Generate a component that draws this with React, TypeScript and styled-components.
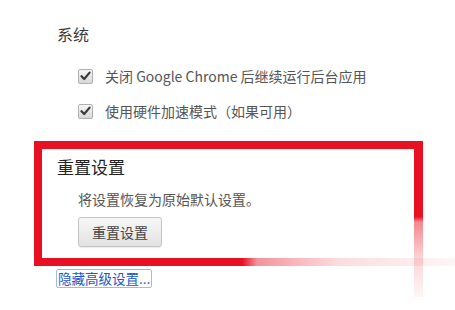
import styled, { createGlobalStyle } from 'styled-components';

const GlobalStyle = createGlobalStyle`
  html, body {
    margin: 0;
    padding: 0;
    background: #ffffff;
  }
  body {
    font-family: "Noto Sans CJK SC", "Liberation Sans", sans-serif;
    color: #333333;
  }
`;

const options = ['关闭 Google Chrome 后继续运行后台应用', '使用硬件加速模式（如果可用）'];

const App = () => {
  return (
    <Page>
      <GlobalStyle />
      <SectionTitle>系统</SectionTitle>
      <CheckList>
        {options.map((label) => (
          <CheckRow key={label}>
            <CheckBox>
              <svg width="11" height="10" viewBox="0 0 11 10">
                <path d="M1.5 5.2 L4.2 8 L9.6 1.6" fill="none" stroke="#3a3a3a" strokeWidth="2.2" strokeLinecap="round" strokeLinejoin="round" />
              </svg>
            </CheckBox>
            <span>{label}</span>
          </CheckRow>
        ))}
      </CheckList>
      <ResetBox>
        <ResetTitle>重置设置</ResetTitle>
        <Description>将设置恢复为原始默认设置。</Description>
        <ResetButton type="button">重置设置</ResetButton>
      </ResetBox>
      <HideLink href="#">隐藏高级设置...</HideLink>
    </Page>
  );
};

export default App;

// Styled Components
const Page = styled.div`
  width: 455px;
  height: 310px;
  box-sizing: border-box;
  padding-top: 24px;
  overflow: hidden;
`;

const SectionTitle = styled.h3`
  margin: 0 0 22px 57px;
  font-size: 16px;
  line-height: 20px;
  font-weight: normal;
  color: #3a3a3a;
`;

const CheckList = styled.div`
  display: flex;
  flex-direction: column;
  gap: 15px;
  margin-left: 78px;
`;

const CheckRow = styled.label`
  display: flex;
  align-items: center;
  gap: 12px;
  height: 20px;
  font-size: 14px;
  color: #555555;
`;

const CheckBox = styled.span`
  display: flex;
  align-items: center;
  justify-content: center;
  width: 13px;
  height: 13px;
  border: 1px solid #b0b0b0;
  border-radius: 2px;
  background: linear-gradient(#f6f6f6, #d8d8d8);
`;

const ResetBox = styled.section`
  position: relative;
  box-sizing: border-box;
  width: 380px;
  margin: 20px 0 0 34px;
  padding: 7px 0 11px 15px;
  border-top: 8px solid #e81123;
  border-left: 8px solid #e81123;

  &::after {
    content: '';
    position: absolute;
    left: -8px;
    top: 100%;
    width: 421px;
    height: 8px;
    background: linear-gradient(
      to right,
      #e81123 0%,
      #e81123 49.5%,
      rgba(232, 17, 35, 0.45) 53%,
      rgba(232, 17, 35, 0.15) 72%,
      rgba(232, 17, 35, 0.04) 100%
    );
  }

  &::before {
    content: '';
    position: absolute;
    left: 100%;
    top: -8px;
    width: 9px;
    height: 156px;
    background: linear-gradient(
      to bottom,
      #e81123 0%,
      #e81123 48.5%,
      rgba(232, 17, 35, 0.5) 52%,
      rgba(232, 17, 35, 0.18) 75%,
      rgba(232, 17, 35, 0.04) 100%
    );
  }
`;

const ResetTitle = styled.h3`
  margin: 0 0 11px;
  font-size: 17px;
  line-height: 22px;
  font-weight: normal;
  color: #222222;
`;

const Description = styled.p`
  margin: 0 0 8px 21px;
  font-size: 14px;
  line-height: 20px;
  color: #555555;
`;

const ResetButton = styled.button`
  display: block;
  margin-left: 21px;
  width: 84px;
  height: 30px;
  padding: 0;
  border: 1px solid #c4c4c4;
  border-radius: 3px;
  background: linear-gradient(#f7f7f7, #e2e2e2);
  box-shadow: 0 1px 1px rgba(0, 0, 0, 0.08);
  font-family: inherit;
  font-size: 14px;
  color: #444444;
  cursor: pointer;
`;

const HideLink = styled.a`
  display: inline-block;
  margin: 11px 0 0 56px;
  padding: 0 1px;
  height: 19px;
  line-height: 17px;
  box-sizing: border-box;
  border: 1px solid #9cbcec;
  border-radius: 2px;
  font-size: 13.5px;
  color: #2255cc;
  text-decoration: none;
`;
